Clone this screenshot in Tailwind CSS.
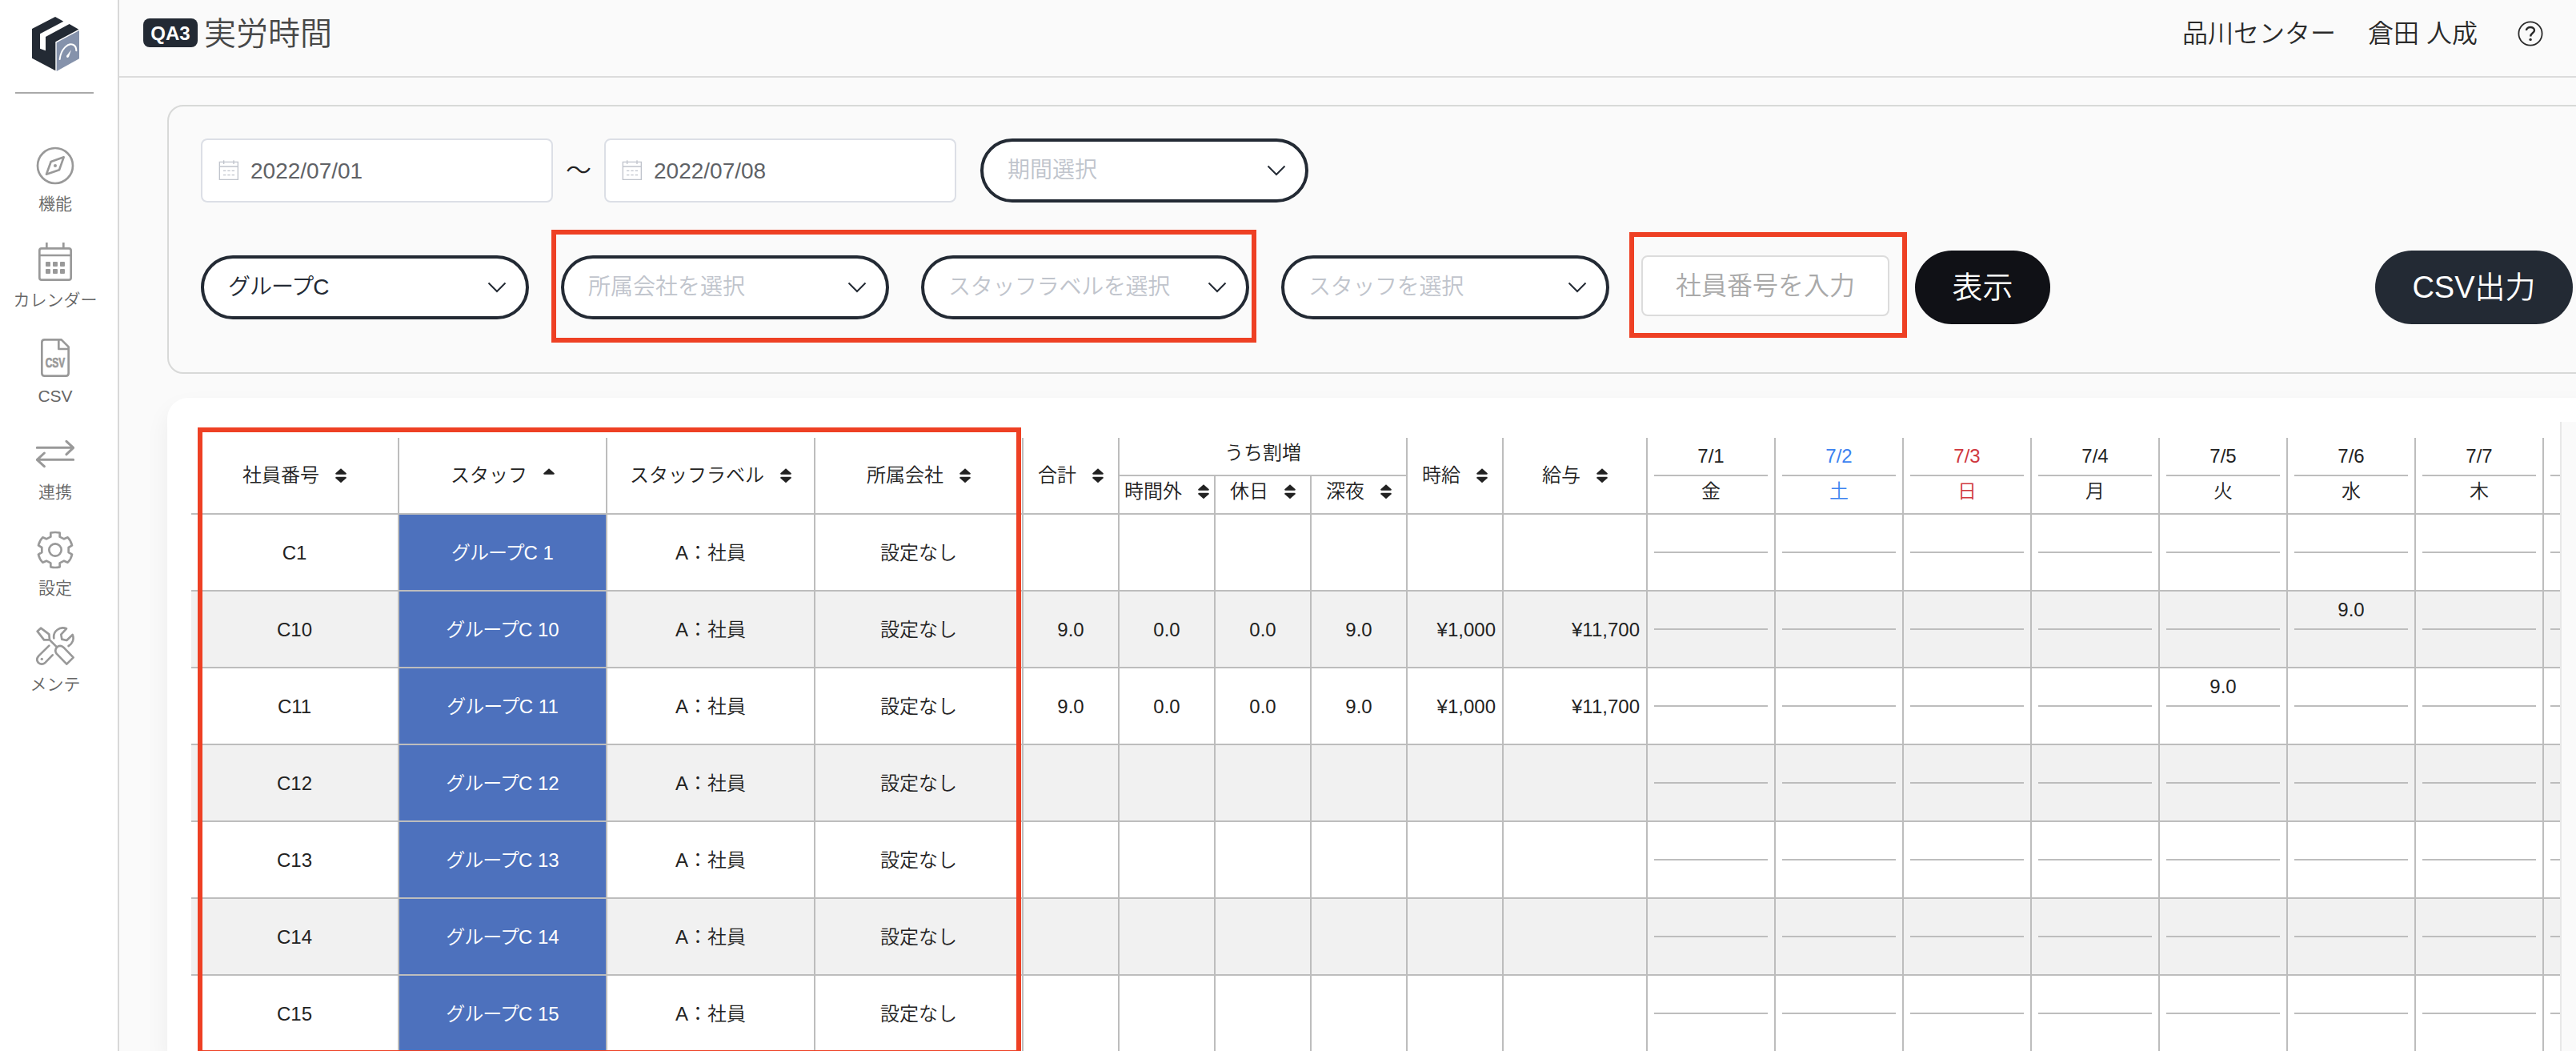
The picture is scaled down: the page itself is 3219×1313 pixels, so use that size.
<!DOCTYPE html>
<html lang="ja">
<head>
<meta charset="utf-8">
<title>実労時間</title>
<script src="https://cdn.jsdelivr.net/npm/@tailwindcss/browser@4"></script>
</head>
<body class="relative flex h-[1313px] w-[3219px] overflow-hidden bg-[#fafafa] font-['Liberation_Sans','Noto_Sans_CJK_JP',sans-serif] font-[350] text-[#222222]">

<!-- Sidebar -->
<aside class="flex w-[149px] shrink-0 flex-col border-r-2 border-[#d8d8d8] bg-white">
  <svg class="mt-[21px] ml-10 h-[68px] w-[59px] shrink-0" viewBox="120 63 177 204">
    <path d="M207 63 L238 80 L150 127 V182 L171 190 V138 L260 90 L295 110 L208 157 V265 L120 218 V108 Z" fill="#232a34"/>
    <path d="M212 160 L297 114 V220 L212 267 Z" fill="#8592ab"/>
    <path d="M224 222 C228 185 255 158 275 168 C283 172 286 180 286 190" fill="none" stroke="#fff" stroke-width="6" stroke-linecap="round"/>
    <path d="M267 187 L258 213 Q252 219 249 212 Q249 207 253 205 Z" fill="#fff"/>
  </svg>
  <div class="mt-[26px] ml-[19px] h-0.5 w-[98px] shrink-0 bg-[#a9a9a9]"></div>
  <nav class="mt-[66px] flex w-[138px] flex-col gap-6 text-[21px] leading-6 text-[#666666]">
    <a class="flex h-24 flex-col items-center gap-3">
      <svg class="size-12 shrink-0" viewBox="135 549 144 144" fill="none" stroke="#999" stroke-width="8" stroke-linejoin="round"><circle cx="207" cy="621" r="66"/><path d="M239 589 L191 606 L174 653 L222 637 Z"/><circle cx="207" cy="621" r="6" fill="#999" stroke="none"/></svg>
      <span class="whitespace-nowrap">機能</span>
    </a>
    <a class="flex h-24 flex-col items-center gap-3">
      <svg class="size-12 shrink-0" viewBox="135 909 144 144" fill="none" stroke="#999" stroke-width="8"><rect x="148" y="931" width="118" height="118" rx="8"/><path d="M148 957 H266 M175 909 V931 M238 909 V931"/><g fill="#999" stroke="none"><rect x="171" y="981" width="18" height="18" rx="3"/><rect x="198" y="981" width="18" height="18" rx="3"/><rect x="225" y="981" width="18" height="18" rx="3"/><rect x="171" y="1008" width="18" height="18" rx="3"/><rect x="198" y="1008" width="18" height="18" rx="3"/><rect x="225" y="1008" width="18" height="18" rx="3"/></g></svg>
      <span class="whitespace-nowrap">カレンダー</span>
    </a>
    <a class="flex h-24 flex-col items-center gap-3">
      <svg class="size-12 shrink-0" viewBox="135 69 144 144" fill="none" stroke="#999" stroke-width="8" stroke-linejoin="round"><path d="M167 73 H230 L257 100 V199 Q257 209 247 209 H167 Q157 209 157 199 V83 Q157 73 167 73 Z M220 75 V108 H257"/><text x="170" y="176" font-size="48" font-weight="bold" textLength="74" lengthAdjust="spacingAndGlyphs" fill="#999" stroke-width="2">CSV</text></svg>
      <span class="whitespace-nowrap">CSV</span>
    </a>
    <a class="flex h-24 flex-col items-center gap-3">
      <svg class="size-12 shrink-0" viewBox="135 429 144 144" fill="none" stroke="#999" stroke-width="9" stroke-linejoin="round" stroke-linecap="round"><path d="M139 478 H275 M249 454 L275 478 L249 503 M275 523 H139 M166 498 L139 523 L166 548"/></svg>
      <span class="whitespace-nowrap">連携</span>
    </a>
    <a class="flex h-24 flex-col items-center gap-3">
      <svg class="size-12 shrink-0" viewBox="135 789 144 144" fill="none" stroke="#999" stroke-width="8" stroke-linejoin="round"><circle cx="207" cy="861" r="23"/><path d="M190 797 Q207 793 224 797 V812 L240 820 L254 814 Q266 826 270 844 L257 852 V870 L270 878 Q266 896 254 908 L240 902 L224 910 V925 Q207 929 190 925 V910 L174 902 L160 908 Q148 896 144 878 L157 870 V852 L144 844 Q148 826 160 814 L174 820 L190 812 Z"/></svg>
      <span class="whitespace-nowrap">設定</span>
    </a>
    <a class="flex h-24 flex-col items-center gap-3">
      <svg class="size-12 shrink-0" viewBox="135 1149 144 144" fill="none" stroke="#999" stroke-width="8" stroke-linejoin="round" stroke-linecap="round"><path d="M140 1166 L153 1154 L184 1177 L186 1198 H165 Z M186 1198 L213 1225 M213 1226 Q225 1215 238 1226 L275 1264 L250 1289 L212 1250 Q203 1238 213 1226 Z M202 1192 C198 1165 225 1146 249 1156 L229 1178 L232 1196 L250 1200 L272 1179 C279 1195 272 1212 257 1221 M184 1220 L145 1258 Q133 1272 144 1284 Q157 1294 170 1283 L197 1255"/><circle cx="157" cy="1270" r="5" fill="#999" stroke="none"/></svg>
      <span class="whitespace-nowrap">メンテ</span>
    </a>
  </nav>
</aside>

<div class="flex w-[3070px] shrink-0 flex-col overflow-hidden">
  <!-- Header -->
  <header class="flex h-[97px] shrink-0 items-start border-b-2 border-[#dcdcdc] pl-[30px]">
    <span class="mt-[23px] flex h-9 w-[68px] items-center justify-center rounded-lg bg-[#232a34] pt-0.5 text-2xl font-bold text-white">QA3</span>
    <h1 class="mt-[18px] ml-2 text-[40px] leading-[48px] text-[#484848]">実労時間</h1>
    <div class="mt-[22px] ml-auto mr-[41px] flex h-10 items-center text-[32px] leading-10 text-[#2a2a2a]">
      <span class="mr-10">品川センター</span>
      <span class="mr-[50px]">倉田 人成</span>
      <svg class="size-8" viewBox="0 0 32 32" fill="none" stroke="#2a2a2a"><circle cx="16" cy="16" r="14.6" stroke-width="1.8"/><path d="M10.9 12 C11.2 6.6 21 6.6 21 12 C21 15.2 16.2 15.4 16.2 19.4" stroke-width="2.4"/><circle cx="16.1" cy="23.4" r="1.7" fill="#2a2a2a" stroke="none"/></svg>
    </div>
  </header>

  <!-- Filters -->
  <section class="mt-[34px] ml-[60px] flex h-[336px] w-[3100px] shrink-0 flex-col gap-[60px] rounded-[20px] border-2 border-[#d8d9d8] pt-10 pl-10 text-[28px] leading-9">
    <div class="flex h-20 items-center">
      <div class="flex h-20 w-[440px] items-center gap-3.5 rounded-lg border-2 border-[#dcdfe6] bg-white pl-5 text-[#606266]">
        <svg class="h-[26px] w-[26px]" viewBox="819 600 78 78" fill="none" stroke="#c0c4cc" stroke-width="4"><path d="M823 607 H892 V673 H823 Z M823 624 H892 M839 601 V615 M876 601 V615 M837 640 H847 M853 640 H863 M869 640 H879 M837 656 H847 M853 656 H863 M869 656 H879"/></svg>
        <span class="pt-0.5">2022/07/01</span>
      </div>
      <span class="w-16 text-center text-[32px]">～</span>
      <div class="flex h-20 w-[440px] items-center gap-3.5 rounded-lg border-2 border-[#dcdfe6] bg-white pl-5 text-[#606266]">
        <svg class="h-[26px] w-[26px]" viewBox="819 600 78 78" fill="none" stroke="#c0c4cc" stroke-width="4"><path d="M823 607 H892 V673 H823 Z M823 624 H892 M839 601 V615 M876 601 V615 M837 640 H847 M853 640 H863 M869 640 H879 M837 656 H847 M853 656 H863 M869 656 H879"/></svg>
        <span class="pt-0.5">2022/07/08</span>
      </div>
      <div class="ml-[30px] flex h-20 w-[410px] items-center justify-between rounded-full border-4 border-[#232a34] bg-white pr-6 pl-[30px] text-[#c0c4cc]">
        <span>期間選択</span>
        <svg class="h-3.5 w-6" viewBox="0 0 24 14" fill="none" stroke="#232a34" stroke-width="2"><path d="M1.5 1.5 L12 12 L22.5 1.5"/></svg>
      </div>
    </div>
    <div class="flex h-[92px] items-center">
      <div class="flex h-20 w-[410px] items-center justify-between rounded-full border-4 border-[#232a34] bg-white pr-6 pl-[30px] text-[#232a34]">
        <span><span class="tracking-[-1px]">グループ</span>C</span>
        <svg class="h-3.5 w-6" viewBox="0 0 24 14" fill="none" stroke="#232a34" stroke-width="2"><path d="M1.5 1.5 L12 12 L22.5 1.5"/></svg>
      </div>
      <div class="ml-10 flex h-20 w-[410px] items-center justify-between rounded-full border-4 border-[#232a34] bg-white pr-6 pl-[30px] text-[#c0c4cc]">
        <span>所属会社を選択</span>
        <svg class="h-3.5 w-6" viewBox="0 0 24 14" fill="none" stroke="#232a34" stroke-width="2"><path d="M1.5 1.5 L12 12 L22.5 1.5"/></svg>
      </div>
      <div class="ml-10 flex h-20 w-[410px] items-center justify-between rounded-full border-4 border-[#232a34] bg-white pr-6 pl-[30px] text-[#c0c4cc]">
        <span class="tracking-[-0.3px]">スタッフラベルを選択</span>
        <svg class="h-3.5 w-6" viewBox="0 0 24 14" fill="none" stroke="#232a34" stroke-width="2"><path d="M1.5 1.5 L12 12 L22.5 1.5"/></svg>
      </div>
      <div class="ml-10 flex h-20 w-[410px] items-center justify-between rounded-full border-4 border-[#232a34] bg-white pr-6 pl-[30px] text-[#c0c4cc]">
        <span class="tracking-[-0.3px]">スタッフを選択</span>
        <svg class="h-3.5 w-6" viewBox="0 0 24 14" fill="none" stroke="#232a34" stroke-width="2"><path d="M1.5 1.5 L12 12 L22.5 1.5"/></svg>
      </div>
      <div class="mb-1 ml-10 flex h-[76px] w-[310px] items-center rounded-lg border-2 border-[#dcdcdc] bg-white pl-[41px] text-[32px] text-[#a9a9a9]">社員番号を入力</div>
      <button class="ml-8 h-[92px] w-[169px] rounded-full bg-[#101116] text-[38px] text-white">表示</button>
      <button class="ml-[406px] h-[92px] w-[247px] rounded-full bg-[#232a34] text-[38px] text-white">CSV出力</button>
    </div>
  </section>

  <!-- Table card -->
  <section class="mt-[30px] ml-[60px] flex h-[816px] w-[3100px] shrink-0 items-start rounded-t-[26px] bg-white pl-[30px] shadow-[0_14px_30px_rgba(0,0,0,0.06)]">
    <div id="table" class="mt-[50px] h-[766px] w-[2960px] shrink-0 overflow-hidden text-2xl leading-7"></div>
    <div class="mt-[30px] h-[786px] w-40 border-l-2 border-[#e8e8e8] bg-[#fafafa]"></div>
  </section>
</div>

<!-- Highlight frames -->
<div class="absolute top-[287px] left-[689px] h-[141px] w-[881px] border-6 border-[#ee4024]"></div>
<div class="absolute top-[290px] left-[2036px] h-[132px] w-[347px] border-6 border-[#ee4024]"></div>
<div class="absolute top-[534px] left-[247px] h-[779px] w-[1029px] border-6 border-b border-[#ee4024]"></div>

<script>
  const GRID = 'grid w-[3120px] grid-cols-[repeat(4,260px)_repeat(5,120px)_180px_repeat(8,160px)]';
  const UP = '<path d="M7 0.3 L13.8 6.2 Q14 7.7 12.5 7.7 H1.5 Q0 7.7 0.2 6.2 Z"/>';
  const DOWN = '<path d="M7 18.2 L13.8 12.3 Q14 10.8 12.5 10.8 H1.5 Q0 10.8 0.2 12.3 Z"/>';
  const sortable = (label, down = true) =>
    `<div class="flex items-center justify-center gap-5"><span class="whitespace-nowrap">${label}</span><svg class="h-[18px] w-3.5 shrink-0" viewBox="0 0 14 18" fill="#222">${UP}${down ? DOWN : ''}</svg></div>`;
  const headCell = (label, down) =>
    `<div class="flex items-center justify-center border-r-2 border-[#bdbdbd]">${sortable(label, down)}</div>`;
  const split = (top, bottom, tone) =>
    `<div class="flex flex-col items-center border-r-2 border-[#bdbdbd] px-2 ${tone}"><div class="flex h-[46px] items-center">${top}</div><div class="h-0.5 w-full shrink-0 bg-[#bdbdbd]"></div><div class="flex h-[38px] items-center">${bottom}</div></div>`;
  const dates = [['7/1','金',''],['7/2','土','text-[#3b82f0]'],['7/3','日','text-[#d0383e]'],['7/4','月',''],['7/5','火',''],['7/6','水',''],['7/7','木',''],['','','']];

  let html = `<div class="${GRID} h-24 border-b-2 border-[#bdbdbd]">`
    + headCell('社員番号') + headCell('スタッフ', false) + headCell('スタッフラベル') + headCell('所属会社') + headCell('合計')
    + `<div class="col-span-3 flex flex-col border-r-2 border-[#bdbdbd]">
         <div class="flex h-12 items-start justify-center border-b-2 border-[#bdbdbd] pt-[5px]">うち割増</div>
         <div class="grid h-[46px] grid-cols-[120px_120px_118px]">
           <div class="border-r-2 border-[#bdbdbd] pt-[5px]">${sortable('時間外')}</div>
           <div class="border-r-2 border-[#bdbdbd] pt-[5px]">${sortable('休日')}</div>
           <div class="pt-[5px]">${sortable('深夜')}</div>
         </div>
       </div>`
    + headCell('時給') + headCell('給与')
    + dates.map(d => split(d[0], d[1], d[2])).join('') + '</div>';

  const rows = [
    { n: 1 },
    { n: 10, v: ['9.0','0.0','0.0','9.0','¥1,000','¥11,700'], day: 5 },
    { n: 11, v: ['9.0','0.0','0.0','9.0','¥1,000','¥11,700'], day: 4 },
    { n: 12 }, { n: 13 }, { n: 14 }, { n: 15 }
  ];
  rows.forEach((r, i) => {
    const v = r.v || ['','','','','',''];
    html += `<div class="${GRID} h-24 border-b-2 border-[#bdbdbd] ${i % 2 ? 'bg-[#f1f1f1]' : 'bg-white'}">`
      + `<div class="flex items-center justify-center border-r-2 border-[#bdbdbd] pt-0.5">C${r.n}</div>`
      + `<div class="flex items-center justify-center border-r-2 border-[#bdbdbd] bg-[#4d71bd] pt-0.5 text-white"><span><span class="tracking-[-1px]">グループ</span>C ${r.n}</span></div>`
      + `<div class="flex items-center justify-center border-r-2 border-[#bdbdbd] pt-0.5">A：社員</div>`
      + `<div class="flex items-center justify-center border-r-2 border-[#bdbdbd] pt-0.5">設定なし</div>`
      + v.map((x, k) => `<div class="flex items-center border-r-2 border-[#bdbdbd] pt-0.5 ${k > 3 ? 'justify-end pr-2' : 'justify-center'}">${x}</div>`).join('')
      + dates.map((_, k) => split(r.day === k ? '9.0' : '', '', '')).join('')
      + '</div>';
  });
  document.getElementById('table').innerHTML = html;
</script>
</body>
</html>
